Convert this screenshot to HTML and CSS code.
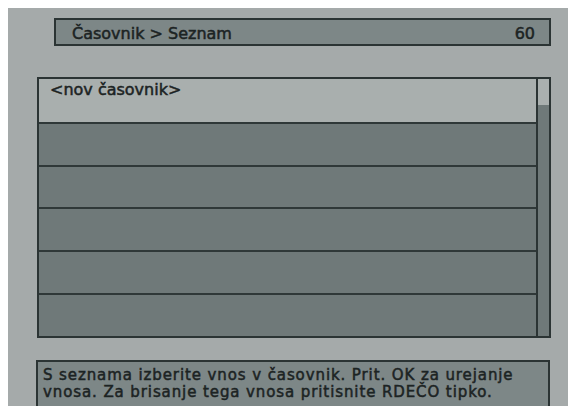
FILE: index.html
```html
<!DOCTYPE html>
<html lang="sl">
<head>
<meta charset="utf-8">
<title>Časovnik &gt; Seznam</title>
<link rel="stylesheet" href="styles.css">
</head>
<body>
<div class="screen">
  <div class="titlebar">
    <span class="title">Časovnik &gt; Seznam</span>
    <span class="count">60</span>
  </div>
  <div class="list">
    <div class="rows">
      <div class="row selected">&lt;nov časovnik&gt;</div>
      <div class="row"></div>
      <div class="row"></div>
      <div class="row"></div>
      <div class="row"></div>
      <div class="row"></div>
    </div>
    <div class="scrollbar"><div class="thumb"></div></div>
  </div>
  <div class="help">S seznama izberite vnos v časovnik. Prit. OK za urejanje<br>vnosa. Za brisanje tega vnosa pritisnite RDEČO tipko.</div>
</div>
</body>
</html>
```
FILE: styles.css
```css
html, body {
  height: 100%;
}
body {
  margin: 0;
  padding: 8px 0 0 8px;
  box-sizing: border-box;
  background: #ffffff;
  overflow: hidden;
  font-family: "DejaVu Sans", Verdana, sans-serif;
  color: #1c2323;
}
.screen {
  height: 100%;
  background: #a5aaaa;
  padding: 10px 17px 0 29px;
  box-sizing: border-box;
  display: flex;
  flex-direction: column;
}
.titlebar {
  margin-left: 17px;
  height: 28px;
  box-sizing: border-box;
  border: 2px solid #2b3434;
  background: #7d8787;
  display: flex;
  justify-content: space-between;
  align-items: flex-start;
  padding: 4px 14px 0 16px;
  font-size: 16px;
  line-height: 20px;
  -webkit-text-stroke: 0.5px #1c2323;
}
.list {
  margin-top: 31px;
  height: 261px;
  box-sizing: border-box;
  border: 2px solid #2b3434;
  display: flex;
}
.rows {
  flex: 1;
  display: grid;
  grid-template-rows: repeat(6, 1fr);
}
.row {
  background: #6f7979;
  border-top: 2px solid #2f3838;
  padding: 1px 0 0 11px;
  font-size: 16px;
  line-height: 20px;
  -webkit-text-stroke: 0.5px #1c2323;
}
.row.selected {
  background: #a9afae;
  border-top: 0;
}
.scrollbar {
  width: 11px;
  border-left: 2px solid #2b3434;
  background: #6f7979;
  display: flex;
  flex-direction: column;
}
.thumb {
  height: 26px;
  background: #aab0af;
}
.help {
  margin: 22px 1px 0 -1px;
  flex: 1;
  border: 2px solid #2b3434;
  border-bottom: 0;
  background: #7d8787;
  padding: 5px 0 0 5px;
  font-size: 15px;
  line-height: 17px;
  letter-spacing: 0.9px;
  -webkit-text-stroke: 0.5px #1c2323;
  white-space: nowrap;
}
```
